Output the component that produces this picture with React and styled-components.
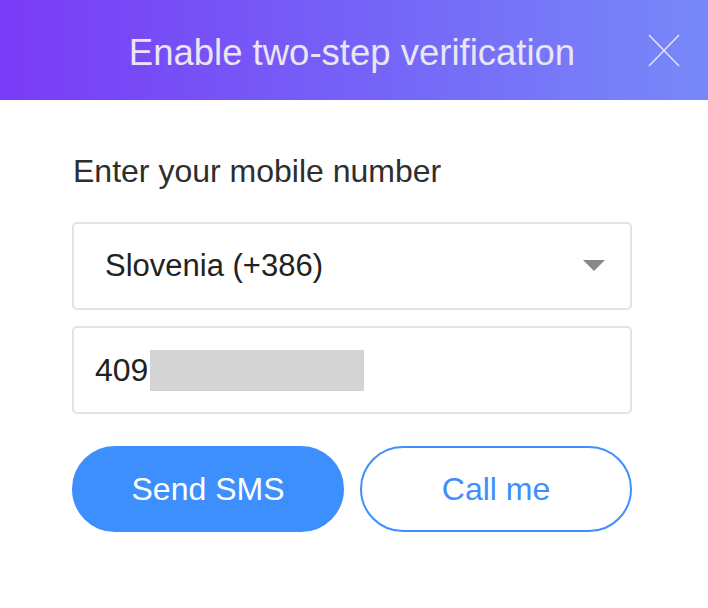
import React from 'react';
import styled, { createGlobalStyle } from 'styled-components';

const GlobalStyle = createGlobalStyle`
  html, body {
    margin: 0;
    padding: 0;
    background: #ffffff;
  }
  body {
    font-family: "Liberation Sans", Arial, Helvetica, sans-serif;
  }
  * {
    box-sizing: border-box;
  }
`;

const Modal = styled.div`
  width: 708px;
  height: 608px;
  background: #ffffff;
`;

const Header = styled.header`
  height: 100px;
  display: grid;
  grid-template-columns: 1fr auto 1fr;
  align-items: center;
  padding: 6px 28px 0 28px;
  background: linear-gradient(90deg, #7a3bf6 0%, #7562f7 50%, #7789f9 100%);
`;

const Title = styled.h1`
  grid-column: 2;
  margin: 0 4px 0 0;
  font-size: 36.5px;
  font-weight: 400;
  line-height: 42px;
  color: #e9e5f1;
  white-space: nowrap;
`;

const CloseButton = styled.button`
  grid-column: 3;
  justify-self: end;
  width: 32px;
  height: 33px;
  padding: 0;
  margin-top: -6px;
  border: none;
  background: none;
  cursor: pointer;
  display: flex;

  svg {
    display: block;
  }
`;

const Body = styled.div`
  width: 560px;
  margin-left: 72px;
  padding-top: 53px;
  display: flex;
  flex-direction: column;
`;

const Label = styled.label`
  font-size: 32px;
  line-height: 36px;
  color: #2e2e2e;
  margin-left: 1px;
`;

const Field = styled.div`
  height: 88px;
  margin-top: ${(p) => p.$gap}px;
  border: 2px solid #e4e4e4;
  border-radius: 5px;
  display: flex;
  align-items: center;
  padding: 0 25px 0 ${(p) => p.$indent}px;
  font-size: ${(p) => p.$size}px;
  color: #222222;
  background: #ffffff;
`;

const FieldText = styled.span`
  flex: 1;
  white-space: nowrap;
  display: flex;
  align-items: center;
`;

const Redacted = styled.span`
  display: inline-block;
  width: 214px;
  height: 41px;
  margin-left: 2px;
  background: #d4d4d4;
`;

const Caret = styled.span`
  width: 0;
  height: 0;
  border-left: 11px solid transparent;
  border-right: 11px solid transparent;
  border-top: 11px solid #888888;
  margin-top: -2px;
`;

const Actions = styled.div`
  margin-top: 32px;
  display: grid;
  grid-template-columns: 1fr 1fr;
  gap: 16px;
`;

const Button = styled.button`
  height: 86px;
  border-radius: 43px;
  font-family: inherit;
  font-size: 32px;
  cursor: pointer;
  border: 2px solid #3d8ffd;
  background: ${(p) => (p.$primary ? '#3d8ffd' : '#ffffff')};
  color: ${(p) => (p.$primary ? '#ffffff' : '#3d8ffd')};
`;

function CloseIcon() {
  return (
    <svg width="32" height="33" viewBox="0 0 32 33">
      <path d="M1 1 L31 32 M31 1 L1 32" stroke="#e4e1ee" strokeWidth="1.6" fill="none" />
    </svg>
  );
}

export default function App() {
  return (
    <>
      <GlobalStyle />
      <Modal>
        <Header>
          <Title>Enable two-step verification</Title>
          <CloseButton aria-label="Close">
            <CloseIcon />
          </CloseButton>
        </Header>
        <Body>
          <Label>Enter your mobile number</Label>
          <Field $gap={33} $indent={31} $size={31}>
            <FieldText>Slovenia (+386)</FieldText>
            <Caret />
          </Field>
          <Field $gap={16} $indent={21} $size={32}>
            <FieldText>
              409
              <Redacted />
            </FieldText>
          </Field>
          <Actions>
            <Button $primary>Send SMS</Button>
            <Button>Call me</Button>
          </Actions>
        </Body>
      </Modal>
    </>
  );
}
